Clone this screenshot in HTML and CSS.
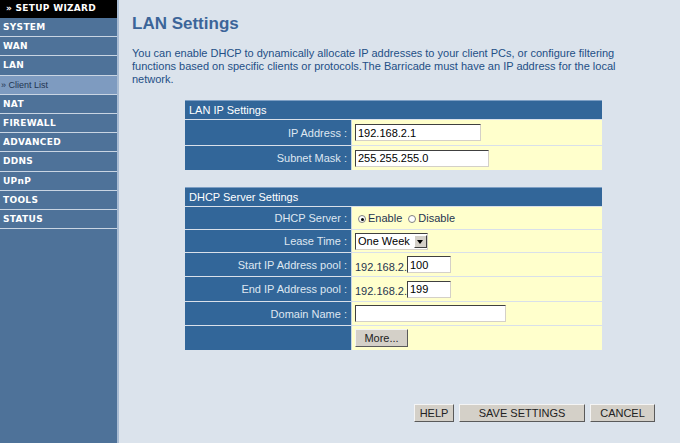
FILE: index.html
```html
<!DOCTYPE html>
<html lang="en">
<head>
    <meta charset="UTF-8">
    <title>LAN Settings</title>
    <link rel="stylesheet" href="styles.css">
</head>
<body>
    <div class="sidebar">
        <div class="menu-wizard">&raquo; SETUP WIZARD</div>
        <div class="menu-item">SYSTEM</div>
        <div class="menu-item">WAN</div>
        <div class="menu-item">LAN</div>
        <div class="menu-sub">&raquo; Client List</div>
        <div class="menu-item">NAT</div>
        <div class="menu-item">FIREWALL</div>
        <div class="menu-item">ADVANCED</div>
        <div class="menu-item">DDNS</div>
        <div class="menu-item">UPnP</div>
        <div class="menu-item">TOOLS</div>
        <div class="menu-item">STATUS</div>
    </div>

    <div class="main">
        <h1>LAN Settings</h1>
        <p class="intro">You can enable DHCP to dynamically allocate IP addresses to your client PCs, or configure filtering functions based on specific clients or protocols.The Barricade must have an IP address for the local network.</p>

        <table class="settings first">
            <tr><th colspan="2">LAN IP Settings</th></tr>
            <tr class="r26">
                <td class="label">IP Address :</td>
                <td class="value"><input type="text" class="ip" value="192.168.2.1"></td>
            </tr>
            <tr class="r25">
                <td class="label">Subnet Mask :</td>
                <td class="value"><input type="text" class="mask" value="255.255.255.0"></td>
            </tr>
        </table>

        <table class="settings second">
            <tr><th colspan="2">DHCP Server Settings</th></tr>
            <tr class="r23">
                <td class="label">DHCP Server :</td>
                <td class="value">
                    <span class="radio on"></span>Enable
                    <span class="radio"></span>Disable
                </td>
            </tr>
            <tr class="r23">
                <td class="label">Lease Time :</td>
                <td class="value">
                    <span class="select">One Week<span class="arrow"></span></span>
                </td>
            </tr>
            <tr class="r24">
                <td class="label">Start IP Address pool :</td>
                <td class="value"><span class="prefix">192.168.2.</span><input type="text" class="pool" value="100"></td>
            </tr>
            <tr class="r25">
                <td class="label">End IP Address pool :</td>
                <td class="value"><span class="prefix">192.168.2.</span><input type="text" class="pool" value="199"></td>
            </tr>
            <tr class="r24">
                <td class="label">Domain Name :</td>
                <td class="value"><input type="text" class="domain" value=""></td>
            </tr>
            <tr class="r25">
                <td class="label"></td>
                <td class="value"><button class="btn more">More...</button></td>
            </tr>
        </table>

        <div class="actions">
            <button class="btn help">HELP</button>
            <button class="btn save">SAVE SETTINGS</button>
            <button class="btn cancel">CANCEL</button>
        </div>
    </div>
</body>
</html>
```

FILE: styles.css
```css
body {
    margin: 0;
    display: flex;
    height: 443px;
    overflow: hidden;
    background-color: #dbe3ec;
    font-family: "Liberation Sans", Arial, sans-serif;
}

.sidebar {
    width: 117px;
    height: 443px;
    flex-shrink: 0;
    background-color: #4e7299;
    border-right: 2px solid #a9bcd3;
}

.menu-wizard {
    height: 18px;
    line-height: 17px;
    padding-left: 6px;
    background-color: #000;
    color: #fff;
    font-family: "DejaVu Sans", Verdana, sans-serif;
    font-weight: bold;
    font-size: 9px;
    letter-spacing: 0.3px;
}

.menu-item {
    height: 18.2px;
    line-height: 18px;
    padding-left: 3px;
    border-bottom: 1px solid #c9d5e3;
    color: #fff;
    font-family: "DejaVu Sans", Verdana, sans-serif;
    font-weight: bold;
    font-size: 9px;
    letter-spacing: 0.3px;
}

.menu-sub {
    height: 18.2px;
    line-height: 19px;
    padding-left: 1px;
    border-bottom: 1px solid #c9d5e3;
    background-color: #7e9bc0;
    color: #1e3552;
    font-size: 9px;
}

.main {
    flex: 1;
    padding-left: 13px;
}

h1 {
    margin: 14px 0 0 0;
    font-size: 17px;
    line-height: 20px;
    color: #3b6599;
}

.intro {
    margin: 13px 0 0 0;
    width: 490px;
    font-size: 11px;
    line-height: 13px;
    color: #234f86;
}

.settings {
    margin-left: 53px;
    width: 417px;
    border-collapse: collapse;
    font-size: 11px;
}

.settings.first {
    margin-top: 14px;
}

.settings.second {
    margin-top: 17px;
}

.settings th {
    height: 18px;
    padding: 0 0 0 4px;
    text-align: left;
    font-weight: normal;
    color: #fff;
    background-color: #326699;
    border-top: 1px solid #7d9fc4;
}

.settings td {
    padding: 0;
    border-top: 1px solid #d9e0ea;
}

.settings .label {
    width: 162px;
    padding-right: 4px;
    text-align: right;
    color: #dfe7f1;
    background-color: #326699;
}

.settings .value {
    padding-left: 3px;
    background-color: #ffffcc;
    border-left: 1px solid #c8d5e4;
    color: #1f3550;
}

.r23 td { height: 22px; }
.r24 td { height: 23px; }
.r25 td { height: 24px; }
.r26 td { height: 25px; }

input[type="text"] {
    box-sizing: border-box;
    height: 17px;
    padding: 0 2px;
    margin: 0;
    font-family: "Liberation Sans", Arial, sans-serif;
    font-size: 11px;
    color: #000;
    background: #fff;
    border: 1px solid #d4d0c8;
    border-top-color: #404040;
    border-left-color: #404040;
    vertical-align: middle;
}

.ip { width: 126px; }
.mask { width: 134px; margin-left: 1px; }
.pool { width: 44px; }
.domain { width: 151px; }

.prefix {
    color: #1f3550;
    vertical-align: middle;
    position: relative;
    top: 2px;
}

.radio {
    display: inline-block;
    box-sizing: border-box;
    width: 8px;
    height: 8px;
    margin: 0 2px 0 3px;
    border-radius: 50%;
    border: 1px solid #808080;
    background: #fff;
    vertical-align: middle;
    position: relative;
}

.radio.on::after {
    content: "";
    position: absolute;
    left: 1.5px;
    top: 1.5px;
    width: 3px;
    height: 3px;
    border-radius: 50%;
    background: #000;
}

.select {
    display: inline-flex;
    align-items: center;
    box-sizing: border-box;
    width: 73px;
    height: 17px;
    padding-left: 2px;
    font-size: 11px;
    color: #000;
    background: #fff;
    border: 1px solid #d4d0c8;
    border-top-color: #404040;
    border-left-color: #404040;
    vertical-align: middle;
}

.select .arrow {
    margin-left: auto;
    width: 13px;
    height: 13px;
    box-sizing: border-box;
    background: #d4d0c8;
    border: 1px solid #fff;
    border-right-color: #404040;
    border-bottom-color: #404040;
    position: relative;
}

.select .arrow::after {
    content: "";
    position: absolute;
    left: 2px;
    top: 4px;
    border-left: 3.5px solid transparent;
    border-right: 3.5px solid transparent;
    border-top: 4px solid #000;
}

.btn {
    box-sizing: border-box;
    height: 18px;
    padding: 0;
    font-family: "Liberation Sans", Arial, sans-serif;
    font-size: 11px;
    color: #222;
    background-color: #d4d0c8;
    border: 1px solid #f4f4f4;
    border-right-color: #5a5a5a;
    border-bottom-color: #5a5a5a;
    cursor: pointer;
}

.more {
    width: 53px;
    vertical-align: middle;
}

.actions {
    display: flex;
    gap: 5px;
    margin: 54px 0 0 282px;
}

.help { width: 40px; }
.save { width: 126px; }
.cancel { width: 65px; }
```
